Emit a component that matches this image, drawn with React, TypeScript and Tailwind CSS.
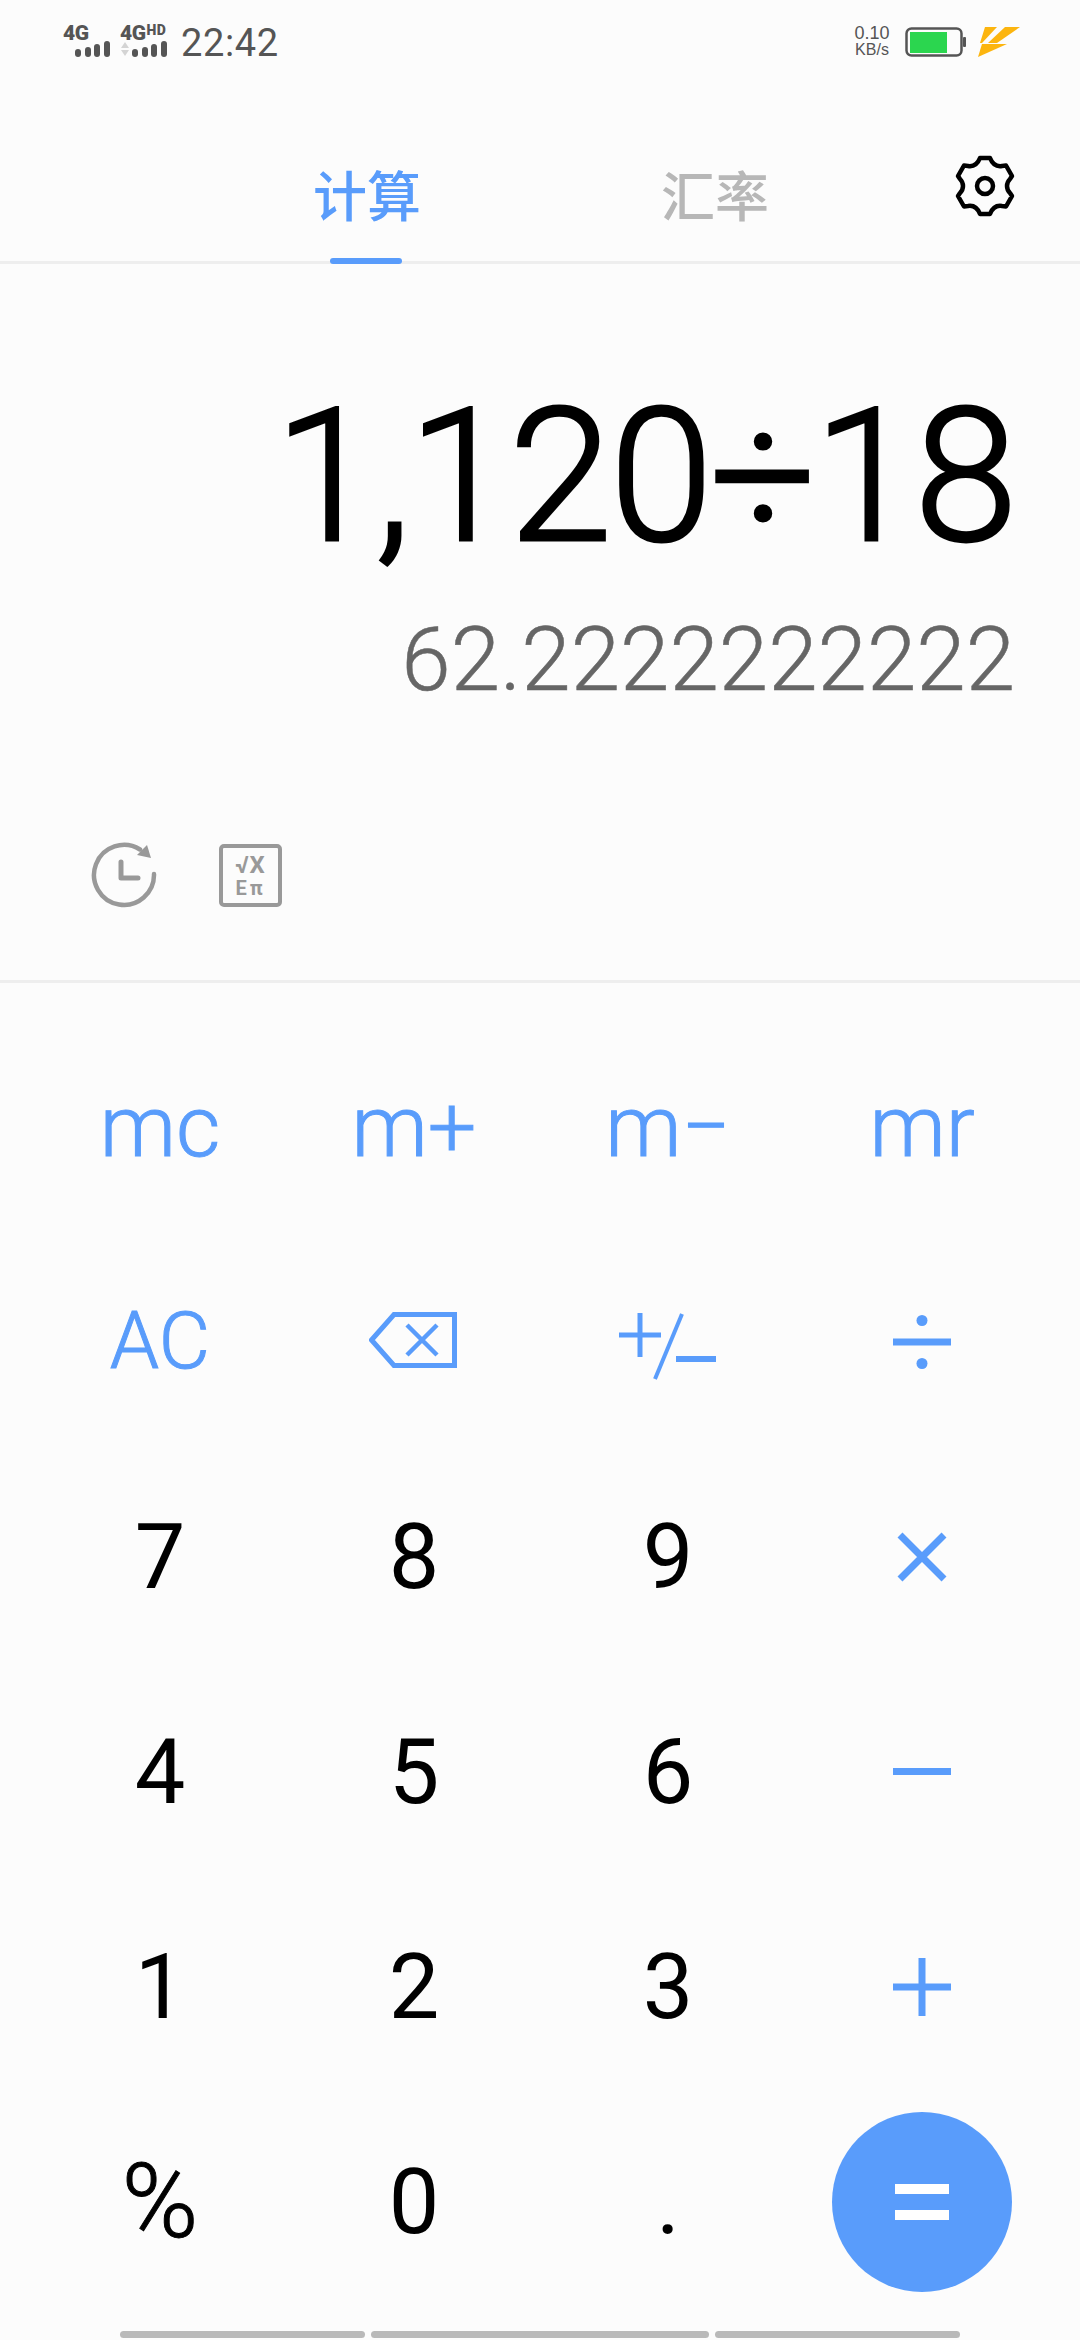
const BLUE = "text-[#599cfb]";

function Bars({ className = "" }: { className?: string }) {
  return (
    <div className={`flex items-end gap-[3.5px] ${className}`}>
      <div className="w-[6px] h-[8px] rounded-[3px] bg-[#555]" />
      <div className="w-[6px] h-[10px] rounded-[3px] bg-[#555]" />
      <div className="w-[6px] h-[13px] rounded-[3px] bg-[#555]" />
      <div className="w-[6px] h-[16px] rounded-[3px] bg-[#555]" />
    </div>
  );
}

function StatusBar() {
  return (
    <div className="h-[84px] flex items-start justify-between pl-[63px] pr-[59px] pt-[25px] text-[#555] font-['Roboto',sans-serif]">
      <div className="flex items-start">
        <div className="w-[47px] h-[31px] flex flex-col">
          <div className="text-[21px] leading-[16px] font-black tracking-[-0.5px]">4G</div>
          <Bars className="ml-[12px]" />
        </div>
        <div className="ml-[10px] w-[47px] flex flex-col">
          <div className="flex text-[21px] leading-[16px] font-black tracking-[-0.5px]">
            4G<span className="text-[14px] leading-[11px] font-black ml-[1px] tracking-[0.5px]">HD</span>
          </div>
          <div className="flex items-end">
            <svg width="10" height="16" viewBox="0 0 10 16" className="mr-[2px]">
              <path d="M5 1 L9 7 H1 Z M1 9 H9 L5 15 Z" fill="#d4d4d4" />
            </svg>
            <Bars />
          </div>
        </div>
        <div className="ml-[14px] text-[38px] leading-[37px] tracking-[0.6px]">22:42</div>
      </div>
      <div className="flex items-start">
        <div className="flex flex-col items-center w-[36px] font-['Liberation_Sans',sans-serif] text-[#555]">
          <div className="text-[18px] leading-[18px] mt-[-1px]">0.10</div>
          <div className="text-[16px] leading-[15px]">KB/s</div>
        </div>
        <svg width="62" height="31" viewBox="0 0 62 31" className="ml-[15px] mt-[2px]">
          <rect x="1.5" y="1.5" width="55" height="27" rx="5" fill="none" stroke="#555" strokeWidth="2.5" />
          <rect x="5" y="5" width="37" height="21" fill="#2bd64f" />
          <rect x="58" y="10" width="3" height="10" rx="1" fill="#555" />
        </svg>
        <svg width="44" height="32" viewBox="0 0 44 32" className="ml-[10px] mt-[1px]">
          <path d="M8 1 H20 L5 17 H3 Z" fill="#fcb50f" />
          <path d="M28 1 H43 L20 17 H11 Z" fill="#fcb50f" />
          <path d="M5 18 H30 L1 31 Z" fill="#fcb50f" />
        </svg>
      </div>
    </div>
  );
}

function Gear() {
  return (
    <svg width="60" height="62" viewBox="0 0 60 62" className="absolute left-[955px] top-[155px]" fill="none" stroke="#000" strokeWidth="4.5" strokeLinejoin="round">
      <path d="M25 3 H35 C37 8 41 12 47 11 L51 10.5 L57 21 L55 24 C51 28 51 34 55 38 L57 41 L51 51.5 L47 51 C41 50 37 54 35 59 H25 C23 54 19 50 13 51 L9 51.5 L3 41 L5 38 C9 34 9 28 5 24 L3 21 L9 10.5 L13 11 C19 12 23 8 25 3 Z" />
      <circle cx="30" cy="31" r="8" />
    </svg>
  );
}

function Tabs() {
  return (
    <div className="relative h-[180px] border-b-[3px] border-[#eeeeee] font-['Noto_Sans_CJK_SC',sans-serif]">
      <div className="flex h-full pl-[313px] pt-[74px] text-[54px] leading-[72px] font-medium">
        <div className="relative w-[108px] text-[#599cfb]">
          计算
          <div className="absolute left-[17px] top-[100px] w-[72px] h-[6px] rounded-full bg-[#599cfb]" />
        </div>
        <div className="ml-[240px] text-[#b7b7b7]">汇率</div>
      </div>
    </div>
  );
}

function Display() {
  return (
    <div className="h-[719px] relative border-b-[3px] border-[#eeeeee] pr-[65px] flex flex-col items-end font-['Roboto',sans-serif]">
      <div className="mt-[104px] text-[186px] leading-[216px] font-light text-black tracking-[-2.5px] [-webkit-text-stroke:3px_#000]">1,120÷18</div>
      <div className="mt-[23px] text-[89px] leading-[106px] font-light text-[#666] [-webkit-text-stroke:0.5px_#666]">62.2222222222</div>
      <div className="absolute left-[90px] top-[577px] flex items-center gap-[61px]">
        <svg width="68" height="68" viewBox="0 0 68 68" fill="none">
          <path d="M50 8.5 A30 30 0 1 0 64 33" stroke="#999" strokeWidth="4.5" strokeLinecap="round" />
          <path d="M57 4 L61 17 L47 14 Z" fill="#999" />
          <path d="M31 21 V37 H48" stroke="#999" strokeWidth="5" strokeLinecap="round" strokeLinejoin="round" />
        </svg>
        <div className="w-[63px] h-[63px] rounded-[5px] border-[4px] border-[#999] flex flex-col items-center justify-center text-[#999] font-['Roboto',sans-serif] font-bold">
          <div className="text-[24px] leading-[25px] tracking-[1px]">√X</div>
          <div className="text-[20px] leading-[20px] tracking-[3px]">Eπ</div>
        </div>
      </div>
    </div>
  );
}

function Key({ children, className = "" }: { children: React.ReactNode; className?: string }) {
  return <div className={`flex items-center justify-center h-[215px] ${className}`}>{children}</div>;
}

function Pad() {
  const fn = `${BLUE} text-[86px] font-light font-['Roboto',sans-serif] [-webkit-text-stroke:1px_#599cfb]`;
  const num = "text-black text-[90px] font-['Roboto',sans-serif] pt-[2px]";
  return (
    <div className="grid grid-cols-4 pl-[33px] pr-[31px] pt-[36px]">
      <Key className={fn}>mc</Key>
      <Key className={fn}>m+</Key>
      <Key className={fn}>m−</Key>
      <Key className={fn}>mr</Key>

      <Key className={`${BLUE} text-[79px] font-light font-['Roboto',sans-serif] [-webkit-text-stroke:1px_#599cfb]`}>AC</Key>
      <Key>
        <svg width="88" height="56" viewBox="0 0 88 56" fill="none" stroke="#599cfb" className="ml-[-3px] mt-[-4px]">
          <path d="M25 2.5 H85.5 V53.5 H25 L2.5 28 Z" strokeWidth="5" />
          <path d="M38 13 L68 43 M68 13 L38 43" strokeWidth="4.5" />
        </svg>
      </Key>
      <Key>
        <svg width="98" height="68" viewBox="0 0 98 68" fill="none" stroke="#599cfb" className="mt-[8px]">
          <path d="M0 23 H42 M21 1 V45" strokeWidth="5" />
          <path d="M63 2 L36 67" strokeWidth="4" />
          <path d="M57 47 H97" strokeWidth="6" />
        </svg>
      </Key>
      <Key>
        <svg width="58" height="54" viewBox="0 0 58 54" fill="#599cfb">
          <rect x="0" y="23.5" width="58" height="7" />
          <circle cx="29" cy="5.5" r="5.5" />
          <circle cx="29" cy="48.5" r="5.5" />
        </svg>
      </Key>

      <Key className={num}>7</Key>
      <Key className={num}>8</Key>
      <Key className={num}>9</Key>
      <Key>
        <svg width="50" height="50" viewBox="0 0 50 50" stroke="#599cfb" strokeWidth="7">
          <path d="M3 3 L47 47 M47 3 L3 47" />
        </svg>
      </Key>

      <Key className={num}>4</Key>
      <Key className={num}>5</Key>
      <Key className={num}>6</Key>
      <Key>
        <div className="w-[58px] h-[7px] bg-[#599cfb]" />
      </Key>

      <Key className={num}>1</Key>
      <Key className={num}>2</Key>
      <Key className={num}>3</Key>
      <Key>
        <svg width="58" height="58" viewBox="0 0 58 58" stroke="#599cfb" strokeWidth="7">
          <path d="M0 29 H58 M29 0 V58" />
        </svg>
      </Key>

      <Key className="text-black text-[104px] font-light font-['Roboto',sans-serif] [-webkit-text-stroke:1px_#000]">%</Key>
      <Key className={num}>0</Key>
      <Key className={num}>.</Key>
      <Key>
        <div className="w-[180px] h-[180px] rounded-full bg-[#599cfb] flex flex-col items-center justify-center gap-[16px]">
          <div className="w-[54px] h-[10px] bg-white" />
          <div className="w-[54px] h-[10px] bg-white" />
        </div>
      </Key>
    </div>
  );
}

export default function App() {
  return (
    <div className="relative w-[1080px] h-[2340px] overflow-hidden bg-[#fcfcfc] flex flex-col">
      <StatusBar />
      <Tabs />
      <Display />
      <Gear />
      <Pad />
      <div className="flex gap-[6px] pl-[120px] mt-[22px]">
        <div className="w-[245px] h-[7px] rounded-full bg-[#b9b9b9]" />
        <div className="w-[338px] h-[7px] rounded-full bg-[#b9b9b9]" />
        <div className="w-[245px] h-[7px] rounded-full bg-[#b9b9b9]" />
      </div>
    </div>
  );
}
